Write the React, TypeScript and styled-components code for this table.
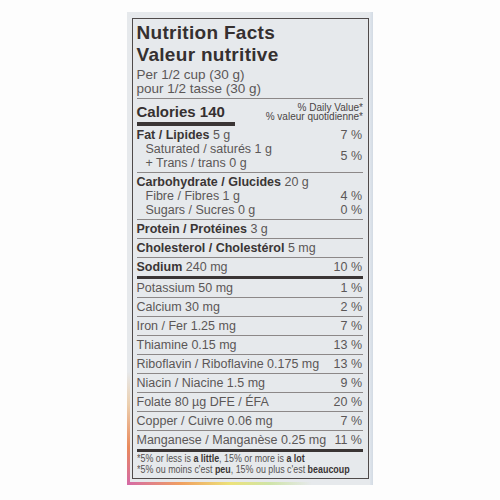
import styled, { createGlobalStyle } from "styled-components";

const GlobalStyle = createGlobalStyle`
  html, body {
    margin: 0;
    padding: 0;
    background: #fdfdfd;
  }
  body {
    font-family: "Liberation Sans", Arial, sans-serif;
  }
`;

const Page = styled.div`
  height: 500px;
  box-sizing: border-box;
  padding-top: 12px;
  display: flex;
  justify-content: center;
  align-items: flex-start;
`;

const Panel = styled.div`
  width: 246px;
  box-sizing: border-box;
  padding: 6px 4px 6px 5px;
  background:
    linear-gradient(
        to bottom,
        transparent 0,
        transparent 76%,
        #eccfae 83%,
        #e98a5c 92%,
        #d46aa6 100%
      )
      left top / 3px 100% no-repeat,
    linear-gradient(
        to right,
        #d46aa6 0,
        #f0a060 22%,
        #ece27a 42%,
        #cfe4a8 58%,
        transparent 75%
      )
      left bottom / 100% 3px no-repeat,
    linear-gradient(to right, #dfe5ec, #d3dbe4) right top / 3px 100% no-repeat,
    #e6e9ec;
`;

const Label = styled.div`
  border: 1.5px solid #4f4a4a;
  padding: 3px 5px 2px 3.5px;
  color: #5b5757;
`;

const Title = styled.div`
  font-size: 19px;
  line-height: 22px;
  font-weight: 700;
  letter-spacing: 0.3px;
  color: #353030;
`;

const Serving = styled.div`
  margin-top: 2px;
  font-size: 13.5px;
  line-height: 14px;
`;

const Rule = styled.div`
  margin-top: 2px;
  height: 1px;
  background: #8c8888;
`;

const CaloriesRow = styled.div`
  display: flex;
  justify-content: space-between;
  align-items: flex-start;
  padding-top: 3.5px;
`;

const Calories = styled.div`
  font-size: 15px;
  line-height: 18px;
  font-weight: 700;
  color: #353030;
`;

const DailyValue = styled.div`
  font-size: 10px;
  line-height: 9.5px;
  text-align: right;
  color: #4a4545;
`;

const Bar = styled.div`
  width: 98px;
  height: 4px;
  background: #3a3535;
`;

const Row = styled.div<{ $top: number }>`
  display: flex;
  justify-content: space-between;
  align-items: center;
  padding: 2px 0;
  font-size: 12.5px;
  line-height: 14px;
  border-top: ${(p) => p.$top}px solid
    ${(p) => (p.$top > 1 ? "#3a3535" : "#8c8888")};
`;

const Line = styled.div<{ $indent?: boolean }>`
  padding-left: ${(p) => (p.$indent ? 9 : 0)}px;
  white-space: nowrap;
`;

const Name = styled.span`
  font-weight: 700;
  color: #3a3535;
`;

const Pct = styled.div`
  padding-right: 1px;
  white-space: nowrap;
`;

const Footnote = styled.div`
  border-top: 3.5px solid #3a3535;
  padding-top: 1px;
  font-size: 10px;
  line-height: 11.5px;
  color: #555151;

  b {
    color: #3a3535;
  }
`;

// the printed footnote uses a condensed face
const FootLine = styled.div`
  white-space: nowrap;
  transform: scaleX(0.89);
  transform-origin: left center;
`;

type Entry = { bold?: string; text: string; indent?: boolean };
type Item = { top: number; lines: Entry[]; pct?: string };

const items: Item[] = [
  {
    top: 0,
    lines: [
      { bold: "Fat / Lipides", text: " 5 g" },
      { text: "Saturated / saturés 1 g", indent: true },
      { text: "+ Trans / trans 0 g", indent: true },
    ],
  },
  {
    top: 1,
    lines: [
      { bold: "Carbohydrate / Glucides", text: " 20 g" },
      { text: "Fibre / Fibres 1 g", indent: true },
      { text: "Sugars / Sucres 0 g", indent: true },
    ],
  },
  { top: 1, lines: [{ bold: "Protein / Protéines", text: " 3 g" }] },
  { top: 1, lines: [{ bold: "Cholesterol / Cholestérol", text: " 5 mg" }] },
  { top: 1, lines: [{ bold: "Sodium", text: " 240 mg" }], pct: "10 %" },
  { top: 3, lines: [{ text: "Potassium 50 mg" }], pct: "1 %" },
  { top: 1, lines: [{ text: "Calcium 30 mg" }], pct: "2 %" },
  { top: 1, lines: [{ text: "Iron / Fer 1.25 mg" }], pct: "7 %" },
  { top: 1, lines: [{ text: "Thiamine 0.15 mg" }], pct: "13 %" },
  { top: 1, lines: [{ text: "Riboflavin / Riboflavine 0.175 mg" }], pct: "13 %" },
  { top: 1, lines: [{ text: "Niacin / Niacine 1.5 mg" }], pct: "9 %" },
  { top: 1, lines: [{ text: "Folate 80 µg DFE / ÉFA" }], pct: "20 %" },
  { top: 1, lines: [{ text: "Copper / Cuivre 0.06 mg" }], pct: "7 %" },
  { top: 1, lines: [{ text: "Manganese / Manganèse 0.25 mg" }], pct: "11 %" },
];

const PctColumn = styled.div`
  display: flex;
  flex-direction: column;
  align-items: flex-end;
`;

const PctLine = styled.div<{ $tall?: boolean }>`
  height: ${(p) => (p.$tall ? 28 : 14)}px;
  display: flex;
  align-items: center;
  padding-right: 1px;
`;

function GroupPct({ index }: { index: number }) {
  // the grouped rows put their %DV on specific lines
  if (index === 0)
    return (
      <PctColumn>
        <PctLine>7 %</PctLine>
        <PctLine $tall>5 %</PctLine>
      </PctColumn>
    );
  return (
    <PctColumn>
      <PctLine />
      <PctLine>4 %</PctLine>
      <PctLine>0 %</PctLine>
    </PctColumn>
  );
}

export default function App() {
  return (
    <>
      <GlobalStyle />
      <Page>
        <Panel>
          <Label>
            <Title>Nutrition Facts</Title>
            <Title>Valeur nutritive</Title>
            <Serving>
              Per 1/2 cup (30 g)
              <br />
              pour 1/2 tasse (30 g)
            </Serving>
            <Rule />
            <CaloriesRow>
              <Calories>Calories 140</Calories>
              <DailyValue>
                % Daily Value*
                <br />% valeur quotidienne*
              </DailyValue>
            </CaloriesRow>
            <Bar />
            {items.map((it, i) => (
              <Row key={i} $top={it.top}>
                <div>
                  {it.lines.map((l, j) => (
                    <Line key={j} $indent={l.indent}>
                      {l.bold && <Name>{l.bold}</Name>}
                      {l.text}
                    </Line>
                  ))}
                </div>
                {i < 2 ? <GroupPct index={i} /> : <Pct>{it.pct}</Pct>}
              </Row>
            ))}
            <Footnote>
              <FootLine>
                *5% or less is <b>a little</b>, 15% or more is <b>a lot</b>
              </FootLine>
              <FootLine>
                *5% ou moins c'est <b>peu</b>, 15% ou plus c'est <b>beaucoup</b>
              </FootLine>
            </Footnote>
          </Label>
        </Panel>
      </Page>
    </>
  );
}
